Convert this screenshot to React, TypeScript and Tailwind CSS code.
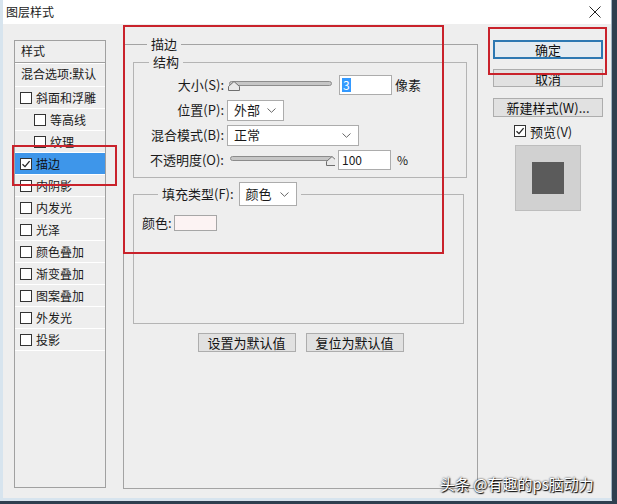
import React from 'react'

const font = "font-['Noto_Sans_CJK_SC','Liberation_Sans',sans-serif]"

function Check({ checked = false }: { checked?: boolean }) {
  return (
    <span className="inline-flex h-[12px] w-[12px] shrink-0 items-center justify-center border border-[#333] bg-white">
      {checked && (
        <svg width="10" height="10" viewBox="0 0 10 10">
          <path d="M1.5 5.2 L4 7.6 L8.6 2.2" fill="none" stroke="#222" strokeWidth="1.3" />
        </svg>
      )}
    </span>
  )
}

function Chevron() {
  return (
    <svg width="9" height="5" viewBox="0 0 9 5" className="shrink-0">
      <path d="M0.5 0.5 L4.5 4.3 L8.5 0.5" fill="none" stroke="#666" strokeWidth="1" />
    </svg>
  )
}

function Slider({ pos }: { pos: number }) {
  const x = 6 + pos * 97
  return (
    <svg width="106" height="16" viewBox="0 0 106 16" className="shrink-0">
      <rect x="1.5" y="4.5" width="102" height="4" rx="2" fill="#c6c6c6" stroke="#8c8c8c" />
      <path
        d={`M${x - 5.5} 13.5 L${x - 5.5} 9.5 L${x} 4.5 L${x + 5.5} 9.5 L${x + 5.5} 13.5 Z`}
        fill="#e9e9e9"
        stroke="#6f6f6f"
      />
    </svg>
  )
}

function Select({ value, width }: { value: string; width: string }) {
  return (
    <div className={`flex h-[21px] ${width} items-center justify-between border border-[#acacac] bg-white pl-[6px] pr-[7px] text-[13px]`}>
      <span>{value}</span>
      <Chevron />
    </div>
  )
}

const items: { label: string; indent?: boolean; selected?: boolean; checked?: boolean }[] = [
  { label: '斜面和浮雕' },
  { label: '等高线', indent: true },
  { label: '纹理', indent: true },
  { label: '描边', selected: true, checked: true },
  { label: '内阴影' },
  { label: '内发光' },
  { label: '光泽' },
  { label: '颜色叠加' },
  { label: '渐变叠加' },
  { label: '图案叠加' },
  { label: '外发光' },
  { label: '投影' },
]

function Btn({ children, primary = false, className = '' }: { children: React.ReactNode; primary?: boolean; className?: string }) {
  return (
    <div
      className={`flex items-center justify-center text-[12px] leading-none text-[#111] ${
        primary ? 'border-2 border-[#2c78b2] bg-[#e3ebf1]' : 'border border-[#adadad] bg-[#e1e1e1]'
      } ${className}`}
    >
      {children}
    </div>
  )
}

export default function App() {
  return (
    <div className={`relative h-[504px] w-[617px] overflow-hidden bg-[#2e3f4f] ${font} text-[#1a1a1a]`}>
      <div className="flex h-[501px] w-[612px] flex-col border-b-[3px] border-l-[3px] border-r border-[#d7e4ee] border-r-[#9fb2c2] bg-[#eeeeee]">
        {/* title bar */}
        <div className="flex h-[24px] shrink-0 items-center justify-between bg-white pl-[3px] pr-[10px]">
          <span className="text-[12px] leading-none">图层样式</span>
          <svg width="12" height="12" viewBox="0 0 12 12">
            <path d="M0.5 0.5 L11.5 11.5 M11.5 0.5 L0.5 11.5" stroke="#222" strokeWidth="1" />
          </svg>
        </div>

        <div className="flex flex-1">
          {/* style list */}
          <div className="ml-[11px] mt-[16px] h-[448px] w-[92px] shrink-0 border border-[#a0a0a0] text-[12px] leading-none">
            <div className="flex h-[22px] items-center border-b border-[#a0a0a0] pb-[2px] pl-[6px]">样式</div>
            <div className="flex h-[24px] items-center border-t border-b border-white pb-[3px] pl-[6px]">混合选项:默认</div>
            {items.map((it) => (
              <div
                key={it.label}
                className={`flex h-[22px] items-center gap-[4px] border-b border-white ${it.indent ? 'pl-[19px]' : 'pl-[5px]'} ${
                  it.selected ? 'bg-[#3e96ea] text-[#111]' : ''
                }`}
              >
                <Check checked={it.checked} />
                <span>{it.label}</span>
              </div>
            ))}
          </div>

          {/* main panel */}
          <fieldset className="ml-[17px] mt-[12px] h-[453px] w-[355px] shrink-0 border border-[#a3a3a3] px-[9px] text-[12px]">
            <legend className="ml-[14px] px-[4px] text-[13px] leading-[16px]">描边</legend>

            <fieldset className="mt-[2px] w-[334px] border border-[#b4b4b4] pb-[6px]">
              <legend className="ml-[15px] px-[4px] text-[13px] leading-[16px]">结构</legend>
              <div className="mt-[4px] flex flex-col gap-[3px]">
                <div className="flex h-[22px] items-center">
                  <span className="w-[90px] text-right text-[13px]">大小(S):</span>
                  <span className="ml-[4px]"><Slider pos={0} /></span>
                  <div className="ml-[5px] flex h-[20px] w-[53px] items-center border border-[#acacac] bg-white pl-[2px]">
                    <span className="bg-[#3399ff] px-[1px] text-[12px] leading-[14px] text-white">3</span>
                  </div>
                  <span className="ml-[3px] text-[13px]">像素</span>
                </div>
                <div className="flex h-[22px] items-center">
                  <span className="w-[90px] text-right text-[13px]">位置(P):</span>
                  <div className="ml-[3px]"><Select value="外部" width="w-[57px]" /></div>
                </div>
                <div className="flex h-[22px] items-center">
                  <span className="w-[90px] text-right text-[13px]">混合模式(B):</span>
                  <div className="ml-[3px]"><Select value="正常" width="w-[132px]" /></div>
                </div>
                <div className="flex h-[22px] items-center">
                  <span className="w-[90px] text-right text-[13px]">不透明度(O):</span>
                  <span className="ml-[5px]"><Slider pos={1} /></span>
                  <div className="ml-[3px] flex h-[20px] w-[53px] items-center border border-[#acacac] bg-white pl-[3px] text-[12px]">100</div>
                  <span className="ml-[6px] text-[12px]">%</span>
                </div>
              </div>
            </fieldset>

            <fieldset className="mt-[4px] h-[142px] w-[331px] border border-[#b4b4b4]">
              <legend className="ml-[24px] flex items-center px-[4px]">
                <span className="text-[13px]">填充类型(F):</span>
                <div className="ml-[5px] flex h-[24px] w-[58px] items-center justify-between border border-[#acacac] bg-white pl-[6px] pr-[7px] text-[13px]">
                  <span>颜色</span>
                  <Chevron />
                </div>
              </legend>
              <div className="mt-[9px] flex items-center pl-[8px]">
                <span className="text-[13px] leading-[16px]">颜色:</span>
                <div className="ml-[2px] h-[16px] w-[43px] border border-[#a6a6a6] bg-[#fcf3f3]" />
              </div>
            </fieldset>

            <div className="mt-[9px] flex justify-center gap-[10px]">
              <Btn className="h-[19px] w-[98px] text-[13px]">设置为默认值</Btn>
              <Btn className="h-[19px] w-[98px] text-[13px]">复位为默认值</Btn>
            </div>
          </fieldset>

          {/* right column */}
          <div className="ml-[15px] flex w-[110px] shrink-0 flex-col">
            <Btn primary className="mt-[16px] h-[19px] text-[13px]">确定</Btn>
            <Btn className="mt-[10px] h-[18px] text-[13px]">取消</Btn>
            <Btn className="mt-[11px] h-[19px] text-[13px]">新建样式(W)...</Btn>
            <div className="ml-[21px] mt-[7px] flex h-[14px] items-center gap-[4px] text-[13px] leading-none">
              <Check checked />
              <span>预览(V)</span>
            </div>
            <div className="ml-[22px] mt-[7px] flex h-[66px] w-[66px] items-center justify-center border border-[#bdbdbd] bg-[#d1d1d1]">
              <div className="h-[32px] w-[32px] bg-[#5b5b5b]" />
            </div>
          </div>
        </div>
      </div>

      {/* annotation boxes */}
      <div className="absolute left-[12px] top-[145px] h-[41px] w-[105px] border-2 border-[#c9222b]" />
      <div className="absolute left-[123px] top-[25px] h-[229px] w-[321px] border-2 border-[#c9222b]" />
      <div className="absolute left-[488px] top-[27px] h-[48px] w-[119px] border-2 border-[#c9222b]" />

      {/* watermark */}
      <div className="absolute left-[440px] top-[474px] text-[15px] leading-[20px] text-white [text-shadow:0_0_2px_#000,1px_1px_1px_#000]">
        头条 @有趣的ps脑动力
      </div>
    </div>
  )
}
